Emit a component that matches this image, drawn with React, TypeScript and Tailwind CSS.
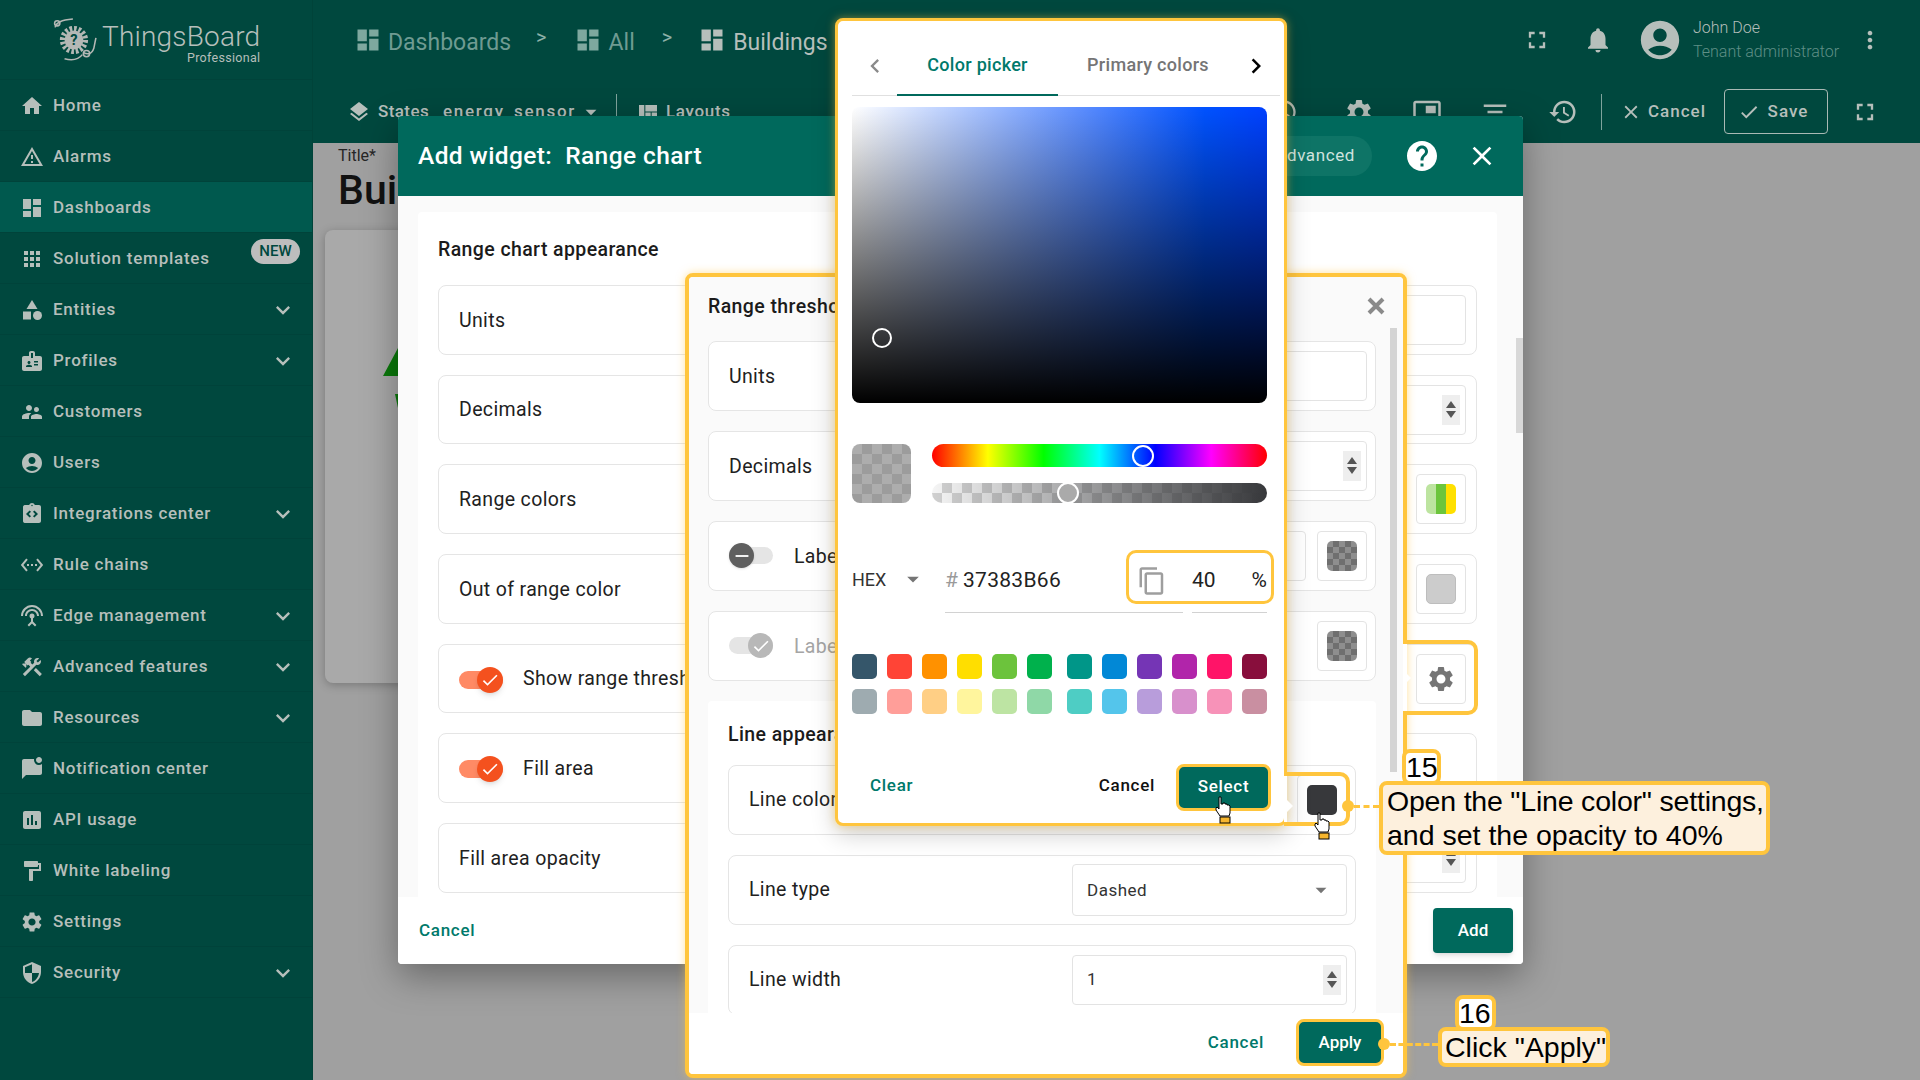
import type { ReactNode } from 'react';
import {
  MdAccessTime, MdAccountCircle, MdApps, MdArrowDropDown, MdAssessment, MdBadge, MdCategory, MdCheck,
  MdChevronLeft, MdChevronRight, MdClose, MdConstruction, MdContentCopy, MdDashboard, MdFilterList,
  MdFolder, MdFormatPaint, MdFullscreen, MdHelp, MdHistory, MdHome, MdIntegrationInstructions, MdKeyboardArrowDown,
  MdLayers, MdMarkChatUnread, MdMoreVert, MdNotifications, MdOutlineWarningAmber, MdPictureInPicture, MdRemove,
  MdSecurity, MdSettings, MdSettingsEthernet, MdSettingsInputAntenna, MdSupervisorAccount, MdViewQuilt,
} from 'react-icons/md';

const nav = [
  { label: 'Home', icon: MdHome },
  { label: 'Alarms', icon: MdOutlineWarningAmber },
  { label: 'Dashboards', icon: MdDashboard, active: true },
  { label: 'Solution templates', icon: MdApps, badge: true },
  { label: 'Entities', icon: MdCategory, more: true },
  { label: 'Profiles', icon: MdBadge, more: true },
  { label: 'Customers', icon: MdSupervisorAccount },
  { label: 'Users', icon: MdAccountCircle },
  { label: 'Integrations center', icon: MdIntegrationInstructions, more: true },
  { label: 'Rule chains', icon: MdSettingsEthernet },
  { label: 'Edge management', icon: MdSettingsInputAntenna, more: true },
  { label: 'Advanced features', icon: MdConstruction, more: true },
  { label: 'Resources', icon: MdFolder, more: true },
  { label: 'Notification center', icon: MdMarkChatUnread },
  { label: 'API usage', icon: MdAssessment },
  { label: 'White labeling', icon: MdFormatPaint },
  { label: 'Settings', icon: MdSettings },
  { label: 'Security', icon: MdSecurity, more: true },
];

const swatchTop = ['#35566a', '#ff4436', '#ff9100', '#ffde00', '#6cc33c', '#00b14c'];
const swatchTopB = ['#009688', '#0288d6', '#7535b5', '#b125aa', '#ff1468', '#880e3c'];
const swatchLow = ['#9eabb0', '#ff9e99', '#ffcf85', '#fff59d', '#bde4a3', '#8fd8a7'];
const swatchLowB = ['#4ecdc4', '#54c5eb', '#b89ddb', '#d890cc', '#f792b8', '#c98fa1'];

function Logo() {
  return (
    <svg width="46" height="46" viewBox="0 0 44 44" className="shrink-0">
      <circle cx="21" cy="22" r="11" fill="none" stroke="#b4b8b5" strokeWidth="5" strokeDasharray="2.5 1.8" />
      <circle cx="21" cy="22" r="9" fill="#b4b8b5" />
      <text x="21" y="27" textAnchor="middle" fontSize="14" fontWeight="700" fill="#00483e" fontFamily="Roboto">?</text>
      <path d="M3 10 C4 5 9 3 20 2 M30 34 C34 36 38 36 40 30 L42 20 M12 40 C20 42 26 40 29 36" fill="none" stroke="#b4b8b5" strokeWidth="1.5" />
      <circle cx="5" cy="6" r="2.5" fill="none" stroke="#b4b8b5" strokeWidth="1.5" />
      <circle cx="33" cy="35" r="3" fill="none" stroke="#b4b8b5" strokeWidth="1.5" />
    </svg>
  );
}

function Sidebar() {
  return (
    <aside className="w-[313px] shrink-0 h-full bg-[#00483e] border-r border-[#004339] text-[#b6bfbb]">
      <div className="h-[80px] flex items-center pl-[52px] border-b border-[#00433a]">
        <Logo />
        <div className="ml-[4px] mt-[8px] flex flex-col items-end leading-none">
          <span className="text-[28px] font-light tracking-[0.2px]">ThingsBoard</span>
          <span className="text-[12.5px] mt-[1px] tracking-[0.3px]">Professional</span>
        </div>
      </div>
      {nav.map(item => {
        const Icon = item.icon;
        return (
          <div
            key={item.label}
            className={`h-[51px] flex items-center pl-[20px] pr-[15px] pt-[2px] border-b border-[#00433a] relative ${item.active ? 'bg-[#00594e]' : ''}`}
          >
            <Icon size={24} className="shrink-0" />
            <span className="ml-[9px] text-[17px] font-medium tracking-[0.75px]">{item.label}</span>
            {item.more && <MdKeyboardArrowDown size={28} className="ml-auto" />}
            {item.badge && (
              <span className="absolute left-[251px] top-[6px] w-[49px] h-[25px] rounded-full bg-[#bdbdbd] text-[#00483e] text-[15px] font-medium flex items-center justify-center">
                NEW
              </span>
            )}
          </div>
        );
      })}
    </aside>
  );
}

function Topbar() {
  return (
    <header className="h-[143px] bg-[#00483e] shrink-0 text-[#b6bfbb] overflow-hidden">
      <div className="h-[80px] flex items-center pl-[41px] pr-[36px]">
        <MdDashboard size={28} className="text-[#7ea89f]" />
        <span className="ml-[6px] mt-[6px] text-[23px] text-[#6f9b92]">Dashboards</span>
        <span className="ml-[25px] text-[20px] text-[#8db0a9] mt-[-6px]">&gt;</span>
        <MdDashboard size={28} className="ml-[27px] text-[#7ea89f]" />
        <span className="ml-[7px] mt-[6px] text-[23px] text-[#6f9b92]">All</span>
        <span className="ml-[27px] text-[20px] text-[#8db0a9] mt-[-6px]">&gt;</span>
        <MdDashboard size={28} className="ml-[26px]" />
        <span className="ml-[7px] mt-[6px] text-[23px]">Buildings</span>
        <MdFullscreen size={28} className="ml-auto" />
        <MdNotifications size={30} className="ml-[32px]" />
        <MdAccountCircle size={46} className="ml-[24px]" />
        <div className="ml-[10px] w-[158px] flex flex-col font-light leading-[24px]">
          <span className="text-[16px]">John Doe</span>
          <span className="text-[16px] text-[#5f8f86]">Tenant administrator</span>
        </div>
        <MdMoreVert size={28} className="ml-[5px]" />
      </div>
      <div className="h-[63px] flex items-center pl-[34px] pr-[41px] text-[17px] font-medium tracking-[0.4px]">
        <MdLayers size={24} />
        <span className="ml-[7px]">States</span>
        <span className="ml-[14px] tracking-[1.7px]">energy_sensor</span>
        <MdArrowDropDown size={26} className="ml-[2px]" />
        <div className="ml-[12px] w-px h-[36px] bg-[#7fa39c]" />
        <MdViewQuilt size={24} className="ml-[19px]" />
        <span className="ml-[6px] tracking-[0.7px]">Layouts</span>
        <MdAccessTime size={28} className="ml-auto mr-[46px]" />
        <MdSettings size={30} className="mr-[38px]" />
        <MdPictureInPicture size={30} className="mr-[38px]" />
        <MdFilterList size={30} className="mr-[38px]" />
        <MdHistory size={30} />
        <div className="ml-[23px] w-px h-[36px] bg-[#7fa39c]" />
        <MdClose size={22} className="ml-[18px]" />
        <span className="ml-[6px] tracking-[1px]">Cancel</span>
        <div className="ml-[18px] w-[104px] h-[45px] rounded border border-[#a9b9b4] flex items-center justify-center gap-[8px] pr-[6px]">
          <MdCheck size={22} />
          <span className="tracking-[1px]">Save</span>
        </div>
        <MdFullscreen size={28} className="ml-[23px]" />
      </div>
    </header>
  );
}

function Behind() {
  return (
    <div className="flex-1 bg-[#a0a0a0] pl-[12px]">
      <div className="h-[87px] pl-[13px] pt-[4px]">
        <div className="text-[16px] text-[#262626] leading-[18px]">Title*</div>
        <div className="text-[41px] font-medium text-[#121212] leading-[48px] mt-[1px]">Buildings</div>
      </div>
      <div className="w-[1100px] h-[453px] rounded-lg bg-[#a9a9a9] shadow-[0_2px_10px_rgba(0,0,0,0.25)] pl-[58px] pt-[118px]">
        <svg width="60" height="60" viewBox="0 0 60 60">
          <path d="M0 28 L15 0 L30 28 Z M12 46 L15 60 L18 46 Z" fill="#0b7a0b" />
        </svg>
      </div>
    </div>
  );
}

function Row({
  label,
  children,
  h = 'h-[69.7px]',
  pr = 'pr-[10px]',
  left,
  muted,
}: {
  label: string;
  children?: ReactNode;
  h?: string;
  pr?: string;
  left?: ReactNode;
  muted?: boolean;
}) {
  return (
    <div className={`${h} ${pr} shrink-0 bg-white rounded-lg border border-[#e5e5e5] flex items-center pl-[20px]`}>
      {left}
      <span className={`mt-[1px] text-[19.5px] tracking-[0.35px] whitespace-nowrap ${muted ? 'text-[#a5a5a5]' : 'text-[#212121]'}`}>{label}</span>
      <div className="ml-auto flex items-center">{children}</div>
    </div>
  );
}

function Spinner() {
  return (
    <div className="w-[18px] h-[30px] bg-[#eeeeee] flex flex-col items-center justify-center gap-[3px]">
      <div className="w-0 h-0 border-x-[5px] border-x-transparent border-b-[7px] border-b-[#555]" />
      <div className="w-0 h-0 border-x-[5px] border-x-transparent border-t-[7px] border-t-[#555]" />
    </div>
  );
}

function Field({ w, value, spin }: { w: string; value?: string; spin?: boolean }) {
  return (
    <div className={`${w} h-[50px] rounded border border-[#e3e3e3] flex items-center justify-between pl-[14px] pr-[5px] text-[17px] text-[#333]`}>
      <span>{value}</span>
      {spin && <Spinner />}
    </div>
  );
}

function ColorButton({ className }: { className: string }) {
  return (
    <div className="w-[50px] h-[50px] rounded border border-[#e3e3e3] flex items-center justify-center">
      <div className={`w-[30px] h-[30px] rounded-[5px] ${className}`} />
    </div>
  );
}

const darkChecker =
  'bg-[repeating-conic-gradient(#6f6f6f_0%_25%,#8e8e8e_0%_50%)] bg-[length:12px_12px]';

function Toggle() {
  return (
    <div className="relative w-[44px] h-[18px] mr-[20px] mt-[2px] rounded-full bg-[#ff8a65]">
      <div className="absolute right-0 top-[-4px] w-[26px] h-[26px] rounded-full bg-[#f4511e] shadow-md flex items-center justify-center text-white">
        <MdCheck size={20} />
      </div>
    </div>
  );
}

function MainDialog() {
  return (
    <div className="absolute left-[398px] top-[116px] w-[1125px] h-[848px] rounded bg-white shadow-[0_12px_36px_rgba(0,0,0,0.35)] overflow-hidden flex flex-col">
      <div className="h-[80px] shrink-0 bg-[#00695c] flex items-center pl-5 pr-[25px] text-white">
        <span className="text-[24.5px] font-medium tracking-[0.4px] whitespace-pre">Add widget:  Range chart</span>
        <div className="ml-auto h-[40px] w-[120px] pr-[17px] rounded-full bg-[#0e7466] text-[17px] tracking-[0.6px] text-[#cfe3df] flex items-center justify-end">Advanced</div>
        <MdHelp size={36} className="ml-[32px]" />
        <MdClose size={32} className="ml-[26px]" />
      </div>
      <div className="relative h-[701px] shrink-0 bg-[#fafafa] pl-5 pr-[26px] pt-4 overflow-hidden">
        <div className="bg-white rounded h-[760px] px-5 pt-[26px]">
          <div className="text-[19.5px] font-medium tracking-[0.4px] text-[#1b1b1b] leading-[24px] mb-[23px]">Range chart appearance</div>
          <div className="flex flex-col gap-[20px]">
            <Row label="Units"><Field w="w-[396px]" /></Row>
            <Row label="Decimals"><Field w="w-[396px]" spin /></Row>
            <Row label="Range colors">
              <div className="w-[50px] h-[50px] rounded border border-[#e3e3e3] flex items-center justify-center">
                <div className="w-[30px] h-[30px] rounded-[5px] overflow-hidden flex">
                  <div className="flex-1 bg-[#bde4a0]" />
                  <div className="flex-1 bg-[#6cc53c]" />
                  <div className="flex-1 bg-[#ffe000]" />
                </div>
              </div>
            </Row>
            <Row label="Out of range color"><ColorButton className="bg-[#cccccc] border border-[#bdbdbd]" /></Row>
            <Row label="Show range thresholds" left={<Toggle />}>
              <div className="w-[50px] h-[50px] rounded border border-[#e3e3e3] flex items-center justify-center text-[#757575]"><MdSettings size={30} /></div>
            </Row>
            <Row label="Fill area" left={<Toggle />} />
            <Row label="Fill area opacity"><Field w="w-[396px]" spin /></Row>
          </div>
        </div>
        <div className="absolute right-0 top-[142px] w-[7px] h-[95px] bg-[#d8d8d8]" />
      </div>
      <div className="flex-1 flex items-center justify-between pl-[21px] pr-[10px] bg-white">
        <span className="text-[17px] font-medium text-[#00796b] tracking-[0.7px]">Cancel</span>
        <div className="w-[80px] h-[45px] rounded bg-[#00695c] text-white text-[17px] font-medium flex items-center justify-center shadow-md">Add</div>
      </div>
    </div>
  );
}

function ThresholdPanel() {
  return (
    <div className="absolute left-[685px] top-[273px] w-[722px] h-[805px] rounded-lg border-4 border-[#ffc53d] bg-white shadow-[0_0_8px_rgba(255,197,61,0.5)] overflow-hidden">
      <div className="h-[736px] bg-[#fafafa] pl-[19px] pr-[27px] overflow-hidden relative">
        <div className="h-[64px] flex items-start pt-[18px] justify-between">
          <span className="text-[19.5px] font-medium tracking-[0.4px] text-[#1b1b1b] leading-[24px]">Range thresholds</span>
          <svg width="18" height="18" viewBox="0 0 18 18" className="mr-[-9px] mt-[2px]">
            <path d="M2 2 L16 16 M16 2 L2 16" stroke="#8a8a8a" strokeWidth="4" />
          </svg>
        </div>
        <div className="flex flex-col gap-[20.5px]">
          <Row label="Units" pr="pr-[8px]" h="h-[69.5px]"><Field w="w-[330px]" /></Row>
          <Row label="Decimals" pr="pr-[8px]" h="h-[69.5px]"><Field w="w-[330px]" spin /></Row>
          <Row
            label="Label"
            pr="pr-[8px]"
            h="h-[69.5px]"
            left={
              <div className="relative w-[44px] h-[17px] mr-[21px] rounded-full bg-[#e5e5e5]">
                <div className="absolute left-0 top-[-4px] w-[25px] h-[25px] rounded-full bg-[#5f5f5f] text-white shadow flex items-center justify-center">
                  <MdRemove size={22} />
                </div>
              </div>
            }
          >
            <Field w="w-[120px]" />
            <div className="w-[11px]" />
            <ColorButton className={darkChecker} />
          </Row>
          <Row
            label="Label"
            muted
            pr="pr-[8px]"
            h="h-[69.5px]"
            left={
              <div className="relative w-[44px] h-[17px] mr-[21px] rounded-full bg-[#e5e5e5]">
                <div className="absolute right-0 top-[-4px] w-[25px] h-[25px] rounded-full bg-[#b8b8b8] text-white flex items-center justify-center">
                  <MdCheck size={20} />
                </div>
              </div>
            }
          >
            <ColorButton className={darkChecker} />
          </Row>
        </div>
        <div className="mt-[20px] bg-white rounded px-5 h-[400px]">
          <div className="pt-[22px] mb-[18px] text-[19.5px] font-medium tracking-[0.4px] text-[#1b1b1b] leading-[24px]">Line appearance</div>
          <div className="flex flex-col gap-[20px]">
            <Row label="Line color" pr="pr-[8px]" h="h-[70px]"><ColorButton className="bg-[#37383b]" /></Row>
            <Row label="Line type" pr="pr-[8px]" h="h-[70px]">
              <div className="w-[275px] h-[52px] rounded border border-[#e3e3e3] flex items-center justify-between pl-[14px] pr-[12px] text-[17px] tracking-[0.5px] text-[#333]">
                <span className="mt-[2px]">Dashed</span>
                <MdArrowDropDown size={26} className="text-[#757575]" />
              </div>
            </Row>
            <Row label="Line width" pr="pr-[8px]" h="h-[70px]"><Field w="w-[275px]" value="1" spin /></Row>
          </div>
        </div>
        <div className="absolute right-[6px] top-[51px] w-[7px] h-[444px] bg-[#d4d4d4]" />
      </div>
      <div className="h-[61px] bg-white flex items-center justify-end pr-[19px] pb-[2px]">
        <span className="mr-[32px] text-[17px] font-medium text-[#00796b] tracking-[0.7px]">Cancel</span>
        <div className="w-[88px] h-[47px] rounded-lg bg-[#00695c] border-[3px] border-[#ffc53d] text-white text-[17px] font-medium flex items-center justify-center">Apply</div>
      </div>
    </div>
  );
}

function Swatch({ color }: { color: string }) {
  return <div className="w-[25px] h-[25px] rounded-[5px]" style={{ backgroundColor: color }} />;
}

function ColorPicker() {
  return (
    <div className="absolute left-[835px] top-[18px] w-[452px] h-[808px] rounded-lg border-[3px] border-[#ffc53d] bg-white shadow-[0_0_8px_rgba(255,197,61,0.5),0_8px_24px_rgba(0,0,0,0.2)] pl-[14px] pr-[4px]">
      <div className="h-[75px] flex items-end border-b border-[#e0e0e0]">
        <div className="w-[45px] h-[62px] pt-[3px] flex items-center justify-center text-[#8a8a8a]"><MdChevronLeft size={28} /></div>
        <div className="w-[161px] h-[62px] border-b-2 border-[#00695c] mb-[-1px] flex items-center justify-center text-[18px] tracking-[0.3px] font-medium text-[#00796b]">Color picker</div>
        <div className="w-[180px] h-[62px] flex items-center justify-center text-[18px] tracking-[0.3px] font-medium text-[#757575]">Primary colors</div>
        <div className="w-[36px] h-[62px] pt-[3px] flex items-center justify-center text-black"><MdChevronRight size={30} /></div>
      </div>
      <div className="w-[415px] pt-[11px]">
        <div className="relative h-[296px] rounded-lg bg-[linear-gradient(to_top,#000,transparent),linear-gradient(to_right,#fff,#5c8eff_55%,#0052ff_85%,#0040ff)]">
          <div className="absolute left-[20px] top-[221px] w-[20px] h-[20px] rounded-full border-2 border-white" />
        </div>
        <div className="mt-[41px] flex gap-[21px]">
          <div className="w-[59px] h-[59px] rounded-lg bg-[repeating-conic-gradient(#9c9c9c_0%_25%,#adadad_0%_50%)] bg-[length:20px_20px]" />
          <div className="flex-1 pt-0">
            <div className="relative h-[23px] rounded-full bg-[linear-gradient(to_right,#f00,#ff0,#0f0,#0ff,#00f,#f0f,#f00)]">
              <div className="absolute left-[200px] top-[0.5px] w-[22px] h-[22px] rounded-full border-2 border-white" />
            </div>
            <div className="relative mt-[16px] h-[20px] rounded-full overflow-visible bg-[linear-gradient(to_right,rgba(55,56,59,0),#37383b),repeating-conic-gradient(#d0d0d0_0%_25%,#f5f5f5_0%_50%)] bg-[length:100%_100%,20px_20px]">
              <div className="absolute left-[125px] top-[-1px] w-[22px] h-[22px] rounded-full border-2 border-white bg-[#aaaaaa]" />
            </div>
          </div>
        </div>
        <div className="relative mt-[47px] h-[63px] flex">
          <div className="w-[93px] h-[58px] flex items-center text-[18px] text-[#333]">
            HEX
            <MdArrowDropDown size={28} className="ml-[13px] text-[#757575]" />
          </div>
          <div className="w-[238px] border-b border-[#d2d2d2] flex items-center">
            <span className="text-[21px] text-[#9a9a9a] mr-[5px]">#</span>
            <span className="text-[21px] text-[#222] tracking-[0.3px]">37383B66</span>
            <MdContentCopy size={30} className="ml-auto mr-[16px] text-[#9e9e9e]" />
          </div>
          <div className="ml-[9px] w-[75px] border-b border-[#d2d2d2] flex items-center justify-between text-[21px] text-[#222]">
            <span className="ml-[0px]">40</span>
            <span>%</span>
          </div>
          <div className="absolute left-[274px] top-0 w-[148px] h-[54px] rounded-[10px] border-[3px] border-[#ffc53d]" />
        </div>
        <div className="mt-[41px] flex flex-col gap-[10px]">
          {[[swatchTop, swatchTopB], [swatchLow, swatchLowB]].map((r, i) => (
            <div key={i} className="flex gap-[15px]">
              <div className="flex gap-[10px]">{r[0].map(c => <Swatch key={c} color={c} />)}</div>
              <div className="flex gap-[10px]">{r[1].map(c => <Swatch key={c} color={c} />)}</div>
            </div>
          ))}
        </div>
        <div className="relative mt-[50px] h-[47px] flex items-center pl-[18px] text-[17px] font-medium tracking-[0.7px]">
          <span className="text-[#00796b] mt-[-4px]">Clear</span>
          <span className="ml-auto text-[#111] mt-[-3px]">Cancel</span>
          <div className="ml-[21px] mr-[-4px] w-[95px] h-[47px] pb-[2px] rounded-lg bg-[#00695c] border-[3px] border-[#ffc53d] text-white flex items-center justify-center">Select</div>
        </div>
      </div>
    </div>
  );
}

function Hand({ className }: { className: string }) {
  return (
    <svg width="18" height="28" viewBox="0 0 18 28" className={className}>
      <path d="M5 1 L7 1 L7 8 L9 8 L9 7 L11 7 L11 8 L13 8 L13 9 L15 9 L16 10 L16 17 L15 20 L6 20 L4 17 L2 14 L2 12 L3 11 L5 13 Z" fill="#fff" stroke="#000" strokeWidth="1" />
      <rect x="6" y="21" width="10" height="6" fill="#f5b52e" stroke="#000" strokeWidth="1" />
    </svg>
  );
}

function Annotations() {
  return (
    <div className="font-['Liberation_Sans',Arial,sans-serif] text-black">
      {/* gear highlight, the panel's edge opens into it */}
      <div className="absolute left-[1403px] top-[644px] w-[4px] h-[67px] bg-white" />
      <div className="absolute left-[1403px] top-[640px] w-[75px] h-[75px] rounded-r-[10px] border-4 border-l-0 border-[#ffc53d]" />
      <div className="absolute left-[1403px] top-[670px] w-0 h-0 border-y-[8px] border-y-transparent border-l-[8px] border-l-white" />
      {/* line color highlight, same for the picker's edge */}
      <div className="absolute left-[1284px] top-[776px] w-[3px] h-[47px] bg-white" />
      <div className="absolute left-[1284px] top-[772px] w-[66px] h-[54px] rounded-r-[10px] border-4 border-l-0 border-[#ffc53d]" />
      <div className="absolute left-[1284px] top-[797px] w-0 h-0 border-y-[9px] border-y-transparent border-l-[9px] border-l-white" />
      <Hand className="absolute left-[1214px] top-[796px]" />
      <Hand className="absolute left-[1313px] top-[812px]" />
      <div className="absolute left-[1342px] top-[800px] w-[12px] h-[12px] rounded-full bg-[#ffc53d]" />
      <div className="absolute left-[1354px] top-[805px] w-[25px] border-t-[3px] border-dashed border-[#ffc53d]" />
      <div className="absolute left-[1379px] top-[781px] w-[391px] h-[74px] rounded-lg border-4 border-[#ffc53d] bg-[#fdf0dd] pl-[4px] text-[28.5px] leading-[34px] whitespace-nowrap">
        <div className="mt-[-1px]">
          <span className="tracking-[-0.2px]">Open the "Line color" settings,</span>
          <br />
          and set the opacity to 40%
        </div>
      </div>
      <div className="absolute left-[1402px] top-[749px] w-[39px] h-[36px] rounded-lg border-4 border-[#ffc53d] bg-white pr-[3px] text-[28.5px] leading-[28px] text-center">15</div>

      <div className="absolute left-[1378px] top-[1038px] w-[12px] h-[12px] rounded-full bg-[#ffc53d]" />
      <div className="absolute left-[1390px] top-[1043px] w-[48px] border-t-[3px] border-dashed border-[#ffc53d]" />
      <div className="absolute left-[1438px] top-[1027px] w-[172px] h-[40px] rounded-lg border-4 border-[#ffc53d] bg-[#fdf0dd] pl-[3px] text-[28.5px] leading-[32px] whitespace-nowrap">Click "Apply"</div>
      <div className="absolute left-[1455px] top-[995px] w-[41px] h-[36px] rounded-lg border-4 border-[#ffc53d] bg-white pr-[2px] text-[28.5px] leading-[28px] text-center">16</div>
    </div>
  );
}

export default function App() {
  return (
    <div className="relative w-[1920px] h-[1080px] overflow-hidden flex font-['Roboto',sans-serif] bg-[#a0a0a0]">
      <Sidebar />
      <main className="flex-1 flex flex-col">
        <Topbar />
        <Behind />
      </main>
      <MainDialog />
      <ThresholdPanel />
      <ColorPicker />
      <Annotations />
    </div>
  );
}
